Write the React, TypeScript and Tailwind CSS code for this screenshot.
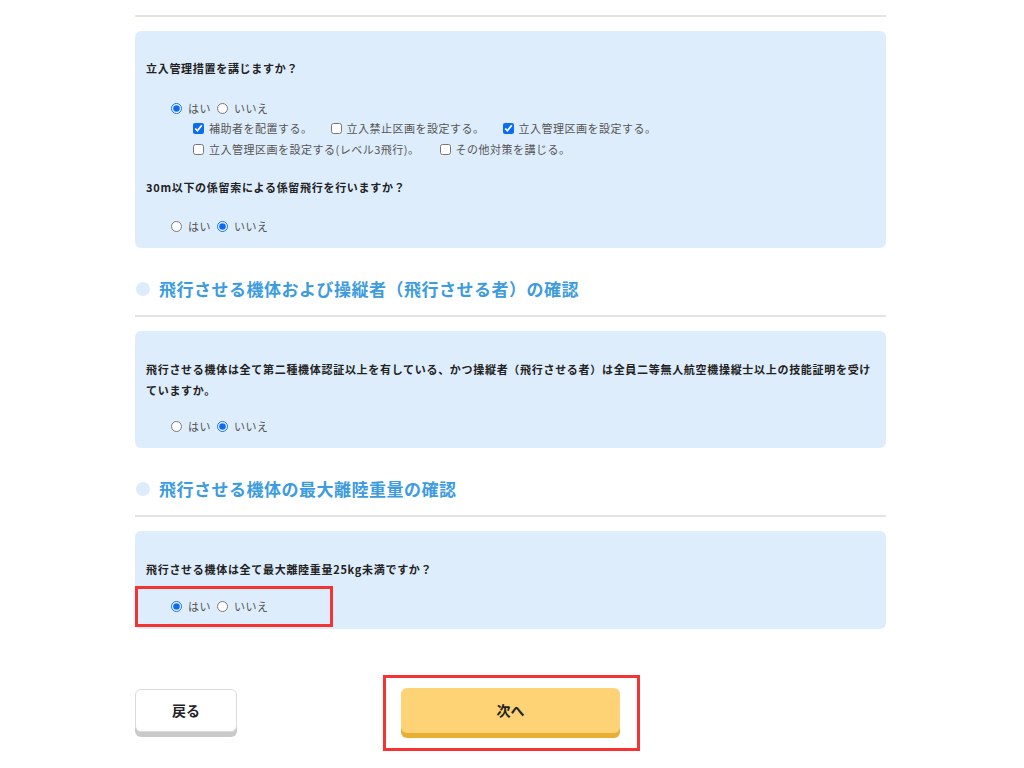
const font = { fontFamily: '"Noto Sans CJK JP", "Noto Sans", sans-serif' };

function Radio({ checked }: { checked?: boolean }) {
  return (
    <input
      type="radio"
      readOnly
      checked={!!checked}
      className="m-0 w-[11px] h-[11px] accent-[#0a6cf5]"
    />
  );
}

function YesNo({ yes }: { yes: boolean }) {
  return (
    <div className="flex items-center h-5 text-[11px] tracking-[0.5px] text-[#555]">
      <Radio checked={yes} />
      <span className="ml-[6px]">はい</span>
      <span className="ml-[6px] flex items-center">
        <Radio checked={!yes} />
      </span>
      <span className="ml-[6px]">いいえ</span>
    </div>
  );
}

function Check({ label, checked }: { label: string; checked?: boolean }) {
  return (
    <label className="flex items-center gap-[5px]">
      <input
        type="checkbox"
        readOnly
        checked={!!checked}
        className="m-0 w-[11px] h-[11px] accent-[#0a6cf5]"
      />
      <span>{label}</span>
    </label>
  );
}

function Heading({ children }: { children: React.ReactNode }) {
  return (
    <>
      <div className="mt-[28px] flex items-center h-[26px]">
        <span className="w-[14px] h-[14px] rounded-full bg-[#dcecfb] ml-px" />
        <h2 className="ml-[9px] text-[17px] tracking-[0.5px] font-bold text-[#3d9be0]">
          {children}
        </h2>
      </div>
      <div className="mt-[13px] h-[2px] bg-[#e4e4e4]" />
    </>
  );
}

export default function App() {
  return (
    <div style={font} className="bg-white min-h-[768px] pt-[15px]">
      <div className="ml-[135px] w-[751px]">
        <div className="h-[2px] bg-[#e4e4e4]" />

        {/* 立入管理 */}
        <div className="mt-[14px] rounded-md bg-[#deedfc] px-[11px] pt-[27px] pb-[12px]">
          <p className="leading-5 text-[11px] tracking-[0.7px] font-bold text-[#222]">
            立入管理措置を講じますか？
          </p>
          <div className="mt-[20px] ml-[25px]">
            <YesNo yes />
          </div>
          <div className="ml-[47px] text-[11px] tracking-[0.5px] text-[#555]">
            <div className="flex items-center h-[21px] gap-x-[18px]">
              <Check label="補助者を配置する。" checked />
              <Check label="立入禁止区画を設定する。" />
              <Check label="立入管理区画を設定する。" checked />
            </div>
            <div className="flex items-center h-[21px] gap-x-[20px]">
              <Check label="立入管理区画を設定する(レベル3飛行)。" />
              <Check label="その他対策を講じる。" />
            </div>
          </div>
          <p className="mt-[17px] leading-5 text-[11px] tracking-[0.7px] font-bold text-[#222]">
            30m以下の係留索による係留飛行を行いますか？
          </p>
          <div className="mt-[19px] ml-[25px]">
            <YesNo yes={false} />
          </div>
        </div>

        <Heading>飛行させる機体および操縦者（飛行させる者）の確認</Heading>

        <div className="mt-[14px] rounded-md bg-[#deedfc] px-[11px] pt-[28px] pb-[12px]">
          <p className="leading-[21px] text-[11px] tracking-[0.7px] font-bold text-[#222]">
            飛行させる機体は全て第二種機体認証以上を有している、かつ操縦者（飛行させる者）は全員二等無人航空機操縦士以上の技能証明を受けていますか。
          </p>
          <div className="mt-[15px] ml-[25px]">
            <YesNo yes={false} />
          </div>
        </div>

        <Heading>飛行させる機体の最大離陸重量の確認</Heading>

        <div className="mt-[14px] rounded-md bg-[#deedfc] pt-[28px] pb-[2px]">
          <p className="px-[11px] leading-5 text-[11px] tracking-[0.7px] font-bold text-[#222]">
            飛行させる機体は全て最大離陸重量25kg未満ですか？
          </p>
          <div className="mt-[7px] w-[198px] h-[41px] border-[3px] border-[#f53333] pl-[33px] flex items-center">
            <YesNo yes />
          </div>
        </div>

        {/* buttons */}
        <div className="mt-[46px] pb-4 flex items-center">
          <button className="w-[102px] h-[43px] rounded-md border border-[#dcdcdc] bg-white shadow-[0_5px_0_#c9c9c9] text-[14px] font-bold text-[#222] mb-[5px]">
            戻る
          </button>
          <div className="ml-[146px] border-[3px] border-[#f53333] pl-[15px] pr-[17px] py-[10px]">
            <button className="block w-[219px] h-[45px] rounded-md bg-[#fdd375] shadow-[0_5px_0_#e8ae36] text-[14px] font-bold text-[#222] mb-[5px]">
              次へ
            </button>
          </div>
        </div>
      </div>
    </div>
  );
}
